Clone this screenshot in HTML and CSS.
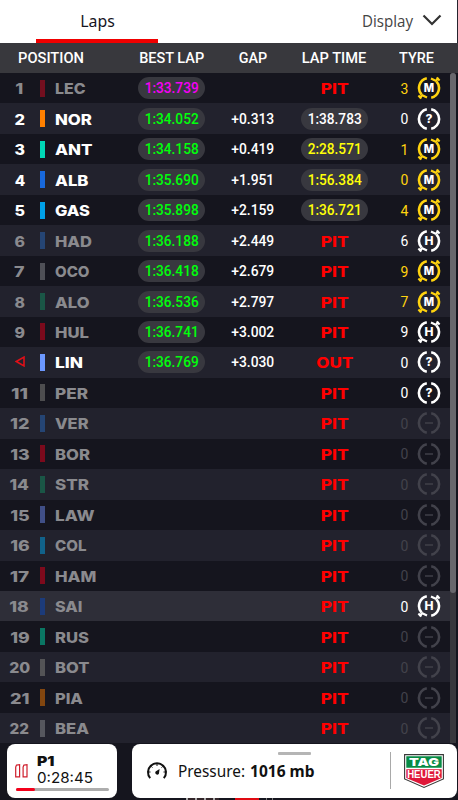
FILE: index.html
```html
<!DOCTYPE html>
<html lang="en">
<head>
<meta charset="utf-8">
<title>Laps</title>
<link rel="stylesheet" href="styles.css">
</head>
<body>
<svg class="defs" aria-hidden="true">
  <symbol id="ring" viewBox="0 0 24 24"><path d="M9.8 2.3A9.9 9.9 0 0 0 9.8 21.7M14.2 2.3A9.9 9.9 0 0 1 14.2 21.7" fill="none" stroke="currentColor" stroke-width="2.6"/></symbol>
  <symbol id="used" viewBox="0 0 24 24"><path d="M9.8 2.3A9.9 9.9 0 0 0 4.6 18.6M14.2 21.7A9.9 9.9 0 0 0 19.4 5.4" fill="none" stroke="currentColor" stroke-width="2.6"/><path d="M14 2.5L18.6 4.8L21.8 2M19.6 1.6L22.6 4.6M10 21.5L5.4 19.2L2.2 22M1.4 19.4L4.4 22.4" fill="none" stroke="currentColor" stroke-width="2.1"/></symbol>
</svg>
<div class="app">
  <header class="tabs">
    <div class="tab"><span data-w="34.5">Laps</span></div>
    <div class="display"><span data-w="51">Display</span><svg class="chevron" viewBox="0 0 20 12"><path d="M1.5 1.5L10 10L18.5 1.5" fill="none" stroke="#333" stroke-width="2.2"/></svg></div>
  </header>
  <div class="head">
    <div class="h-pos"><span data-w="66">POSITION</span></div>
    <div><span data-w="65">BEST LAP</span></div>
    <div><span data-w="28.5">GAP</span></div>
    <div><span data-w="64.5">LAP TIME</span></div>
    <div class="h-tyre"><span data-w="35">TYRE</span></div>
  </div>
  <main class="board">
    <div class="rows" id="rows"></div>
    <div class="track"><div class="thumb"></div></div>
  </main>
  <footer class="footer">
    <section class="card session">
      <div class="clock">
        <svg class="pause" viewBox="0 0 13 14"><path d="M1.4 1.2L4.6 .7V12.8H.7V3ZM8.8 1.2L12 .7V12.8H8.1V3Z" fill="none" stroke="#cf1e2c" stroke-width="1.2"/></svg>
        <div class="clock-text"><div class="p1"><span data-w="17.5">P1</span></div><div class="time"><span data-w="56">0:28:45</span></div></div>
      </div>
      <div class="progress"><div class="done"></div></div>
    </section>
    <section class="card weather">
      <div class="handle"></div>
      <svg class="gauge" viewBox="0 0 22 18"><path d="M4.2 16.2A9 9 0 1 1 17.8 16.2" fill="none" stroke="#111" stroke-width="2"/><path d="M11 2V4M2.5 10H4.5M17.5 10H19.5M5 4.2L6.4 5.6M17 4.2L15.6 5.6" stroke="#111" stroke-width="1"/><path d="M13.6 7.1L12.9 11.8A2 2 0 1 1 9.6 9.5Z" fill="#111"/></svg>
      <div class="pressure"><span data-w="67">Pressure:</span><b><span data-w="64.5">1016 mb</span></b></div>
      <div class="divider"></div>
      <svg class="tag" viewBox="0 0 40 34">
        <path d="M.6 .6H39.4V25L20 33.4L.6 25Z" fill="#fff" stroke="#383838" stroke-width="1.1"/>
        <path d="M2.3 2.3H37.7V13.8H2.3Z" fill="#078b45"/>
        <path d="M2.3 15.2H37.7V23.9L20 31.6L2.3 23.9Z" fill="#df1739"/>
        <text x="5" y="12.1" textLength="30" lengthAdjust="spacingAndGlyphs" class="tag-name">TAG</text>
        <text x="3.2" y="24.2" textLength="33.6" lengthAdjust="spacingAndGlyphs" class="heuer">HEUER</text>
      </svg>
    </section>
    <div class="peek"><i class="peek-white"></i><i class="peek-red"></i><i class="peek-gray"></i></div>
  </footer>
</div>
<script src="rows.js"></script>
</body>
</html>
```
FILE: styles.css
```css
* { box-sizing: border-box; }
body { margin: 0; background: #15151e; font-family: Roboto, "Liberation Sans", sans-serif; }
.defs { position: absolute; width: 0; height: 0; }
.app { width: 458px; height: 800px; display: flex; flex-direction: column; overflow: hidden; }
[data-w] { display: inline-block; white-space: nowrap; }

.tabs { height: 43px; flex: none; background: #fff; display: flex; justify-content: space-between; padding-left: 36px; border-right: 1px solid #25252e; }
.tab { width: 122px; height: 43px; border-bottom: 4px solid #f00000; text-align: center; font: 17px/41px "Noto Sans", sans-serif; color: #15151e; padding-left: 2px; }
.tab span { line-height: 39px; }
.display { display: flex; align-items: center; gap: 9px; padding: 0 15px 3px 0; font: 17px/41px "Open Sans", sans-serif; color: #444; }
.chevron { width: 20px; height: 12px; }

.head { height: 30px; flex: none; background: #38383d; display: grid; grid-template-columns: 138px 67px 96px 67px 90px; font: 500 15px/31px Roboto, sans-serif; color: #fff; text-align: center; }
.head .h-pos { text-align: left; padding-left: 17.5px; }
.head .h-tyre { text-align: left; padding-left: 31px; }

.board { height: 670.4px; flex: none; display: flex; }
.rows { width: 450px; display: flex; flex-direction: column; }
.row { flex: 1; display: grid; grid-template-columns: 40px 15px 83px 67px 96px 67px 24px 25px 25px; align-items: center; background: #15151e; color: #fff; }
.row:nth-child(even) { background: #22222d; }
.row.mine { background: #2e2e38; }
.pos { text-align: center; padding-right: 1px; font: 800 14.5px/20px Inter, sans-serif; }
.name { font: 800 14.5px/20px Inter, sans-serif; }
.row .pos, .row .name, .row .status { padding-top: 2px; }
.off .pos, .off .name { color: #8a8a8e; }
.team { width: 5px; height: 17px; }
.off .team { opacity: .5; }
.pill { height: 22px; border-radius: 11px; background: #38383f; text-align: center; font: 500 14px/23px Roboto, sans-serif; }
.gap { text-align: center; font: 500 14px/23px Roboto, sans-serif; padding-top: 1px; }
.green { color: #00ff0c; }
.purple { color: #f500f5; }
.yellow { color: #ffff08; }
.white { color: #fff; }
.status { text-align: center; color: #ff0000; font: 800 14.5px/20px Inter, sans-serif; }
.age { grid-column: 8; text-align: center; font: 14px/22px Roboto, sans-serif; padding-top: 1px; }
.medium { color: #ffd30f; }
.none { color: #42424b; }
.tyre { width: 24px; height: 24px; display: block; }
.tyre text { font: 800 11.5px Inter, sans-serif; fill: #fff; text-anchor: middle; }
.arrow { width: 10px; height: 11px; display: block; margin: -3px auto 0 15px; }
.track { width: 6px; background: #38383d; border-radius: 3px 3px 0 0; }
.thumb { height: 520px; background: #68686d; border-radius: 3px; }

.footer { flex: 1; display: grid; grid-template-columns: 110px 325px; grid-template-rows: 54px 2px; column-gap: 15px; padding: .6px 0 0 7px; }
.card { background: #fff; border-radius: 8px; color: #111; }
.session { padding: 10px 8px 0; }
.clock { display: flex; align-items: center; gap: 9px; height: 32px; }
.pause { width: 13px; height: 14px; margin-top: 2px; }
.p1 { font: 900 13.5px/15px Inter, sans-serif; padding-top: 1px; }
.time { font: 14px/17px Inter, sans-serif; }
.progress { height: 3px; margin: 2px 0 0 1px; border-radius: 2px; background: #adadad; }
.done { width: 19px; height: 3px; border-radius: 2px; background: #f4001b; }
.weather { display: flex; align-items: center; position: relative; padding-left: 14px; }
.handle { position: absolute; left: 146px; top: 8px; width: 33px; height: 3px; border-radius: 1px; background: #b5b5b5; }
.gauge { width: 22px; height: 18px; }
.pressure { width: 210px; display: flex; gap: 5px; padding: 1px 0 0 10px; font: 16px/22px "Noto Sans", sans-serif; }
.pressure b { font-weight: 700; }
.divider { width: 1px; height: 37px; margin-left: 12px; background: #a9a9a9; }
.tag { width: 40px; height: 34px; margin: 0 0 0 13px; }
.tag-name { font: 900 11px Inter, sans-serif; fill: #fff; }
.heuer { font: 700 10.5px "Liberation Sans", sans-serif; fill: #fff; }
.peek { grid-column: 1 / -1; height: 2px; display: flex; padding-left: 179px; }
.peek-white { width: 33px; background: repeating-linear-gradient(90deg, #aaa 0 2px, #33262a 2px 9px); }
.peek-red { width: 24px; margin-left: 16px; background: #e00a12; }
.peek-gray { width: 7px; margin-left: 7px; border: solid #777; border-width: 0 1px; }
```
FILE: rows.js
```js
// position, driver, name width, team colour, best lap, gap, lap time, tyre age, tyre
const laps = [
  ["1", "LEC", 30.5, "#d20a20", "1:33.739", "", "PIT", 3, "M"],
  ["2", "NOR", 37, "#ff8000", "1:34.052", "+0.313", "1:38.783", 0, "?"],
  ["3", "ANT", 37.5, "#00d7b6", "1:34.158", "+0.419", "2:28.571", 1, "M"],
  ["4", "ALB", 33.5, "#1868db", "1:35.690", "+1.951", "1:56.384", 0, "M"],
  ["5", "GAS", 35, "#00a1e8", "1:35.898", "+2.159", "1:36.721", 4, "M"],
  ["6", "HAD", 37, "#2868bb", "1:36.188", "+2.449", "PIT", 6, "H"],
  ["7", "OCO", 34.5, "#8a8c90", "1:36.418", "+2.679", "PIT", 9, "M"],
  ["8", "ALO", 34.5, "#128a60", "1:36.536", "+2.797", "PIT", 7, "M"],
  ["9", "HUL", 34, "#e2001a", "1:36.741", "+3.002", "PIT", 9, "H"],
  ["", "LIN", 28, "#6c98ff", "1:36.769", "+3.030", "OUT", 0, "?"],
  ["11", "PER", 33, "#85857f", "", "", "PIT", 0, "?"],
  ["12", "VER", 33.5, "#2868bb", "", "", "PIT", 0, "-"],
  ["13", "BOR", 35, "#e2001a", "", "", "PIT", 0, "-"],
  ["14", "STR", 34, "#128a60", "", "", "PIT", 0, "-"],
  ["15", "LAW", 39.5, "#6c89f0", "", "", "PIT", 0, "-"],
  ["16", "COL", 31.5, "#00a1e8", "", "", "PIT", 0, "-"],
  ["17", "HAM", 41.5, "#e8001a", "", "", "PIT", 0, "-"],
  ["18", "SAI", 27.5, "#0a48bc", "", "", "PIT", 0, "H"],
  ["19", "RUS", 34, "#00d7a8", "", "", "PIT", 0, "-"],
  ["20", "BOT", 34.5, "#85857f", "", "", "PIT", 0, "-"],
  ["21", "PIA", 28, "#f07800", "", "", "PIT", 0, "-"],
  ["22", "BEA", 34, "#8a8c90", "", "", "PIT", 0, "-"]
];

const posWidths = { "1": 8, "11": 17, "20": 21 };
const letterWidths = { "M": 10.4, "H": 9, "?": 7 };
const arrow = '<svg class="arrow" viewBox="0 0 10 11"><path d="M9 1.1V9.9L1.3 5.5Z" fill="none" stroke="#e01018" stroke-width="1.6"/></svg>';

function tyreIcon(type) {
  const ring = type === "M" || type === "H" ? "used" : "ring";
  const inner = type === "-"
    ? '<path d="M8 12H16" stroke="currentColor" stroke-width="1.4"/>'
    : `<text x="12" y="16" textLength="${letterWidths[type]}" lengthAdjust="spacingAndGlyphs">${type}</text>`;
  return `<svg class="tyre" viewBox="0 0 24 24"><use href="#${ring}"/>${inner}</svg>`;
}

function pill(text, color) {
  return text ? `<div class="pill ${color}"><span data-w="54">${text}</span></div>` : "<div></div>";
}

document.getElementById("rows").innerHTML = laps.map(([pos, name, width, team, best, gap, lap, age, tyre], i) => {
  const compound = tyre === "M" ? "medium" : tyre === "-" ? "none" : "white";
  const last = lap === "PIT" || lap === "OUT"
    ? `<div class="status"><span data-w="${lap === "PIT" ? 28 : 37}">${lap}</span></div>`
    : pill(lap, i === 1 ? "white" : "yellow");
  const posWidth = posWidths[pos] || (pos.length > 1 ? 19.5 : 10.5);
  return `<div class="row${lap === "PIT" ? " off" : ""}${name === "SAI" ? " mine" : ""}">
    <div class="pos">${pos ? `<span data-w="${posWidth}">${pos}</span>` : arrow}</div>
    <div class="team" style="background:${team}"></div>
    <div class="name"><span data-w="${width}">${name}</span></div>
    ${pill(best, i ? "green" : "purple")}
    <div class="gap">${gap ? `<span data-w="43">${gap}</span>` : ""}</div>
    ${last}
    <div class="age ${compound}">${age}</div>
    <div class="${compound}">${tyreIcon(tyre)}</div>
  </div>`;
}).join("");

// Stretch each label to its intended width.
document.querySelectorAll("[data-w]").forEach(el => {
  const target = Number(el.dataset.w);
  const natural = el.getBoundingClientRect().width;
  const centered = getComputedStyle(el.parentElement).textAlign === "center";
  el.style.transformOrigin = centered ? "50% 50%" : "0 50%";
  el.style.transform = `scaleX(${target / natural})`;
  if (!centered) el.style.width = `${target}px`;
});
```
